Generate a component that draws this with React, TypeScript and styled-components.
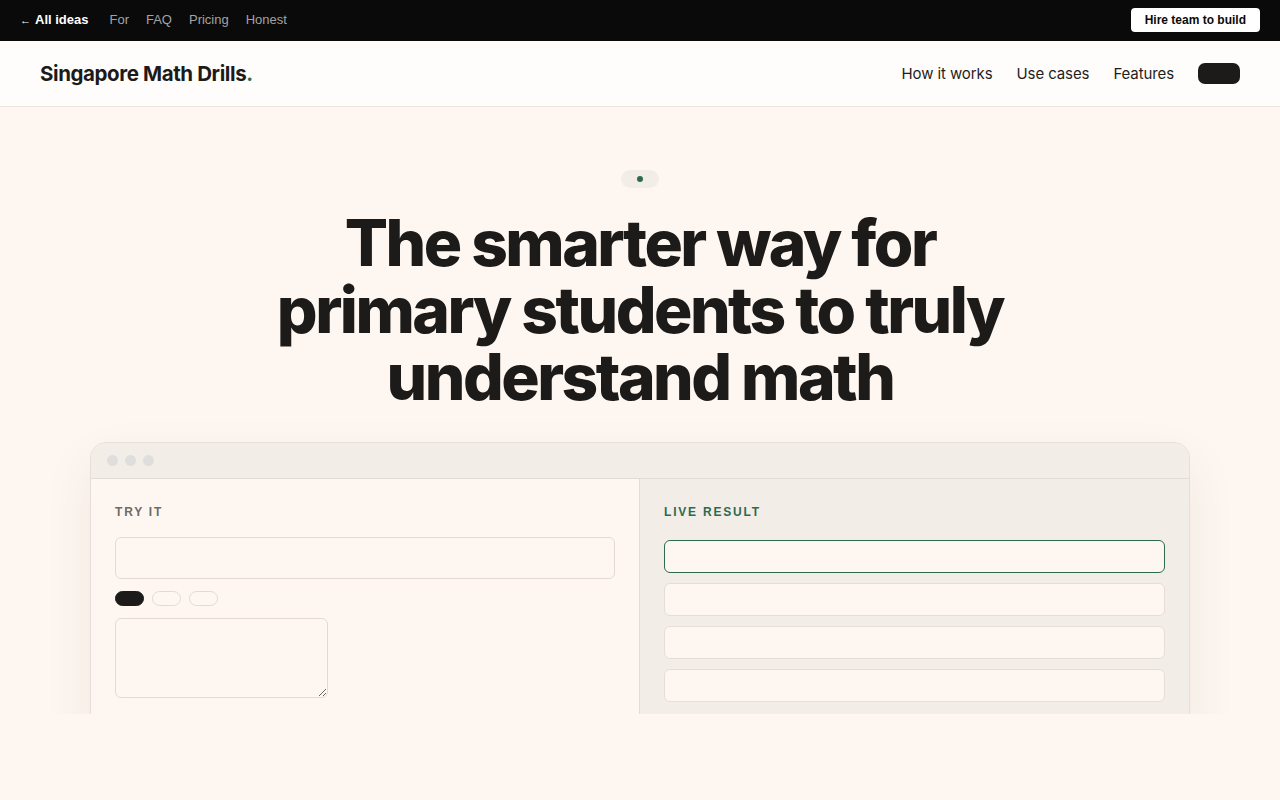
import React from 'react';
import styled, { createGlobalStyle } from 'styled-components';

const GlobalStyle = createGlobalStyle`
    html, body {
        margin: 0;
        padding: 0;
        background: #fef7f1;
    }
    * {
        box-sizing: border-box;
    }
`;

const display = `'Inter', 'Noto Sans', sans-serif`;

const TopBar = styled.div`
    height: 41px;
    background: #0a0a0a;
    display: flex;
    align-items: center;
    justify-content: space-between;
    padding: 0 20px 2px;
    font-family: 'Liberation Sans', Arial, sans-serif;
    font-size: 13px;
`;

const TopLinks = styled.div`
    display: flex;
    align-items: center;
    gap: 17px;
`;

const BackLink = styled.a`
    color: #fff;
    font-weight: 700;
    margin-right: 4px;

    span {
        font-size: 11px;
        font-weight: 400;
        margin-right: 4px;
    }
`;

const TopLink = styled.a`
    color: #a3a3a3;
`;

const HireButton = styled.button`
    background: #fff;
    color: #0a0a0a;
    border: none;
    border-radius: 4px;
    height: 24px;
    padding: 0 14px;
    font-family: 'Liberation Sans', Arial, sans-serif;
    font-size: 12px;
    font-weight: 700;
`;

const Nav = styled.header`
    height: 66px;
    background: #fffdfb;
    border-bottom: 1px solid #ece6e1;
    display: flex;
    align-items: center;
    justify-content: space-between;
    padding: 0 40px;
    font-family: ${display};
`;

const Logo = styled.div`
    font-size: 20.5px;
    font-weight: 700;
    letter-spacing: -0.4px;
    color: #1c1b19;

    span {
        color: #2d6a4f;
    }
`;

const NavLinks = styled.nav`
    display: flex;
    align-items: center;
    gap: 24px;
    font-size: 15px;
    color: #1f1e1c;
    letter-spacing: -0.1px;
`;

const NavCta = styled.span`
    width: 42px;
    height: 21px;
    border-radius: 7px;
    background: #1c1b19;
`;

const Hero = styled.section`
    height: 607px;
    overflow: hidden;
    display: flex;
    flex-direction: column;
    align-items: center;
    padding-top: 63px;
    font-family: ${display};

    & > * {
        flex-shrink: 0;
    }
`;

const Badge = styled.div`
    width: 38px;
    height: 18px;
    border-radius: 9px;
    background: #f3ede7;
    display: flex;
    align-items: center;
    justify-content: center;

    &::before {
        content: '';
        width: 6px;
        height: 6px;
        border-radius: 50%;
        background: #2d6a4f;
    }
`;

const Title = styled.h1`
    margin: 21px 0 0;
    text-align: center;
    font-size: 64px;
    line-height: 67px;
    font-weight: 800;
    letter-spacing: -2.5px;
    color: #1c1b19;
`;

const Window = styled.div`
    margin-top: 32px;
    width: 1100px;
    border: 1px solid #e6ded8;
    border-radius: 16px;
    overflow: hidden;
    background: #fef7f1;
    box-shadow: 0 20px 50px rgba(60, 40, 20, 0.08);
`;

const TitleBar = styled.div`
    height: 36px;
    background: #f3ede7;
    border-bottom: 1px solid #e3dbd5;
    display: flex;
    align-items: center;
    gap: 7px;
    padding-left: 16px;
`;

const Dot = styled.span`
    width: 11px;
    height: 11px;
    border-radius: 50%;
    background: #dfdedd;
`;

const Panes = styled.div`
    display: grid;
    grid-template-columns: 548px 1fr;
    height: 300px;
`;

const Pane = styled.div<{ $tinted?: boolean }>`
    padding: 26px 24px;
    background: ${p => (p.$tinted ? '#f3ede7' : '#fef7f1')};
    border-left: ${p => (p.$tinted ? '1px solid #e3dbd5' : 'none')};
    display: flex;
    flex-direction: column;
    align-items: flex-start;
`;

const Label = styled.div<{ $accent?: boolean }>`
    font-family: 'Liberation Sans', Arial, sans-serif;
    font-size: 12px;
    font-weight: 700;
    letter-spacing: 1.8px;
    color: ${p => (p.$accent ? '#2d6a4f' : '#6f6a66')};
    margin-bottom: 18px;
`;

const Field = styled.div`
    width: 100%;
    height: 42px;
    border: 1px solid #e3dad5;
    border-radius: 6px;
    background: #fef7f1;
`;

const Chips = styled.div`
    display: flex;
    gap: 8px;
    margin: 12px 0;
`;

const Chip = styled.span<{ $active?: boolean }>`
    width: 29px;
    height: 15px;
    border-radius: 8px;
    background: ${p => (p.$active ? '#1c1b19' : 'transparent')};
    border: 1px solid ${p => (p.$active ? '#1c1b19' : '#e3dad5')};
`;

const TextBox = styled.textarea`
    width: 213px;
    height: 80px;
    border: 1px solid #e3dad5;
    border-radius: 6px;
    background: #fef7f1;
    resize: both;
`;

const Results = styled.div`
    width: 100%;
    display: flex;
    flex-direction: column;
    gap: 10px;
    margin-top: 3px;
`;

const ResultRow = styled.div<{ $active?: boolean }>`
    height: 33px;
    border-radius: 6px;
    background: #fef7f1;
    border: 1px solid ${p => (p.$active ? '#2d6a4f' : '#e6ddd7')};
`;

export default function App() {
    return (
        <>
            <GlobalStyle />
            <TopBar>
                <TopLinks>
                    <BackLink>
                        <span>←</span>All ideas
                    </BackLink>
                    <TopLink>For</TopLink>
                    <TopLink>FAQ</TopLink>
                    <TopLink>Pricing</TopLink>
                    <TopLink>Honest</TopLink>
                </TopLinks>
                <HireButton>Hire team to build</HireButton>
            </TopBar>
            <Nav>
                <Logo>
                    Singapore Math Drills<span>.</span>
                </Logo>
                <NavLinks>
                    <span>How it works</span>
                    <span>Use cases</span>
                    <span>Features</span>
                    <NavCta />
                </NavLinks>
            </Nav>
            <Hero>
                <Badge />
                <Title>
                    The smarter way for
                    <br />
                    primary students to truly
                    <br />
                    understand math
                </Title>
                <Window>
                    <TitleBar>
                        <Dot />
                        <Dot />
                        <Dot />
                    </TitleBar>
                    <Panes>
                        <Pane>
                            <Label>TRY IT</Label>
                            <Field />
                            <Chips>
                                <Chip $active />
                                <Chip />
                                <Chip />
                            </Chips>
                            <TextBox />
                        </Pane>
                        <Pane $tinted>
                            <Label $accent>LIVE RESULT</Label>
                            <Results>
                                <ResultRow $active />
                                <ResultRow />
                                <ResultRow />
                                <ResultRow />
                            </Results>
                        </Pane>
                    </Panes>
                </Window>
            </Hero>
        </>
    );
}
